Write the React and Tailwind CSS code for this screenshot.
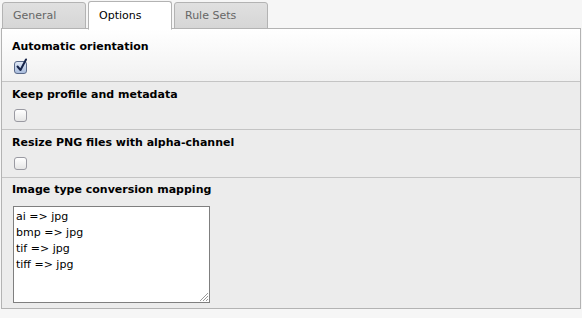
import React from "react";

function Checkbox({ checked }) {
  return (
    <div className="relative w-[13px] h-[13px]">
      <div
        className={
          "w-[13px] h-[13px] rounded-[3px] border " +
          (checked
            ? "border-[#5a6a8a] bg-gradient-to-b from-[#dfe8f6] to-[#a9bcdc]"
            : "border-[#9a9aa2] bg-gradient-to-b from-white to-[#e6e6e6]")
        }
      />
      {checked && (
        <svg
          className="absolute left-[1px] top-[-3px]"
          width="13"
          height="15"
          viewBox="0 0 13 15"
        >
          <path
            d="M2.5 8.5 L5.5 12 L11 1.5"
            fill="none"
            stroke="#16244a"
            strokeWidth="2"
            strokeLinecap="round"
            strokeLinejoin="round"
          />
        </svg>
      )}
    </div>
  );
}

function Tab({ label, active }) {
  return (
    <div
      className={
        "flex items-center pl-[10px] pt-[1px] border border-[#b3b3b3] rounded-t-[3px] text-[11px] " +
        (active
          ? "h-[29px] bg-white border-b-white text-black relative z-10"
          : "h-[27px] mt-[1px] bg-gradient-to-b from-[#e0e0e0] to-[#d6d6d6] text-[#666]")
      }
    >
      {label}
    </div>
  );
}

export default function App() {
  return (
    <div
      className="w-[582px] h-[318px] bg-[#f6f6f6] overflow-hidden"
      style={{ fontFamily: '"DejaVu Sans", Verdana, sans-serif' }}
    >
      <div className="flex items-start gap-[2px] pl-[2px] pt-[1px]">
        <div className="w-[84px]">
          <Tab label="General" />
        </div>
        <div className="w-[84px]">
          <Tab label="Options" active />
        </div>
        <div className="w-[94px]">
          <Tab label="Rule Sets" />
        </div>
      </div>
      <div className="ml-[1px] w-[580px] -mt-[2px] border border-[#b3b3b3] bg-[#ececec]">
        <div className="pt-[11px] pb-[7px] pl-[10px] border-b border-[#c4c4c4] bg-gradient-to-b from-white to-[#f1f1f1]">
          <div className="text-[11px] leading-[14px] font-bold text-black">
            Automatic orientation
          </div>
          <div className="mt-[7px] ml-[2px]">
            <Checkbox checked />
          </div>
        </div>
        <div className="pt-[6px] pb-[7px] pl-[10px] border-b border-[#c4c4c4]">
          <div className="text-[11px] leading-[14px] font-bold text-black">
            Keep profile and metadata
          </div>
          <div className="mt-[7px] ml-[2px]">
            <Checkbox />
          </div>
        </div>
        <div className="pt-[6px] pb-[7px] pl-[10px] border-b border-[#c4c4c4]">
          <div className="text-[11px] leading-[14px] font-bold text-black">
            Resize PNG files with alpha-channel
          </div>
          <div className="mt-[7px] ml-[2px]">
            <Checkbox />
          </div>
        </div>
        <div className="pt-[5px] pb-[5px] pl-[10px]">
          <div className="text-[11px] leading-[14px] font-bold text-black">
            Image type conversion mapping
          </div>
          <div className="relative mt-[9px] ml-[1px] w-[197px] h-[97px] border border-[#7f7f7f] bg-white pl-[2px] pt-[2px] text-[11px] leading-[16px] text-black">
            <div>ai =&gt; jpg</div>
            <div>bmp =&gt; jpg</div>
            <div>tif =&gt; jpg</div>
            <div>tiff =&gt; jpg</div>
            <svg
              className="absolute right-0 bottom-0"
              width="11"
              height="11"
              viewBox="0 0 11 11"
            >
              <path
                d="M10 2 L2 10 M10 5 L5 10 M10 8 L8 10"
                stroke="#9a9a9a"
                strokeWidth="1"
              />
            </svg>
          </div>
        </div>
      </div>
    </div>
  );
}
